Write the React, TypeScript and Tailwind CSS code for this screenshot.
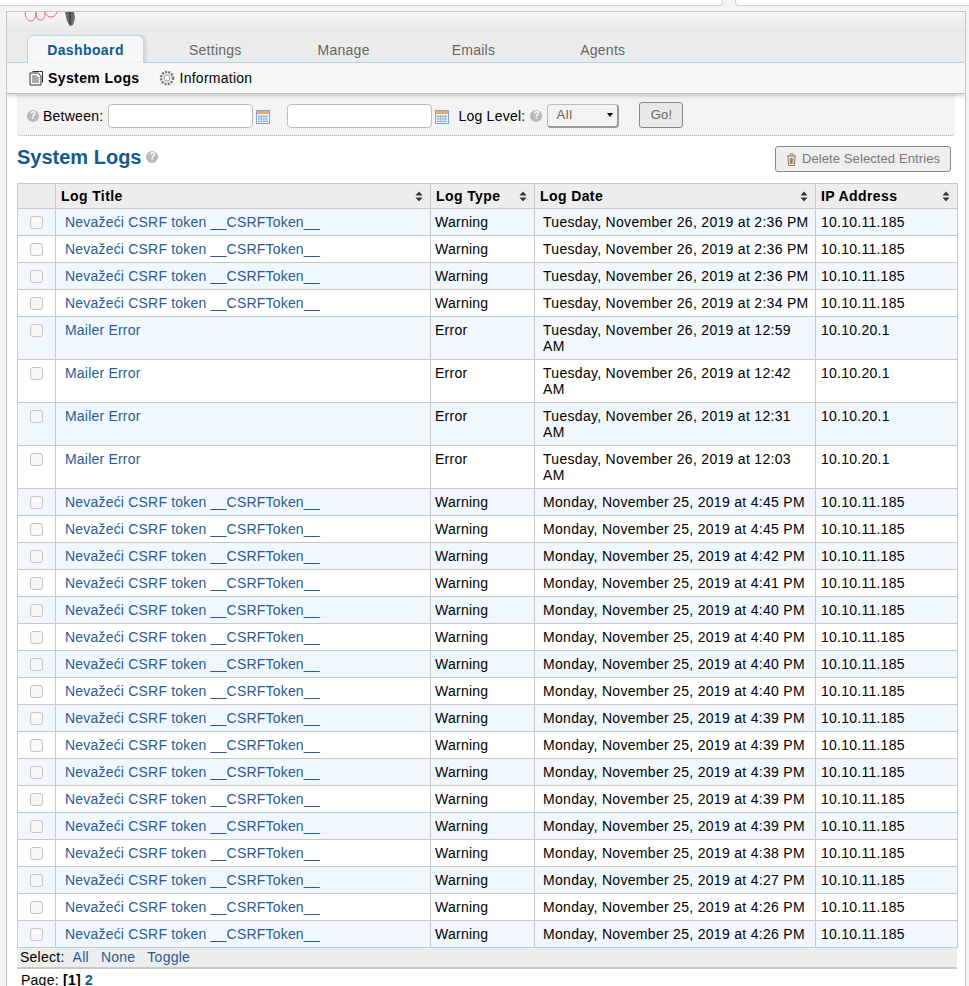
import React from "react";

type Row = [string, string, string, string];
const N = "Nevažeći CSRF token __CSRFToken__";
const M = "Mailer Error";
const rows: Row[] = [
  [N, "Warning", "Tuesday, November 26, 2019 at 2:36 PM", "10.10.11.185"],
  [N, "Warning", "Tuesday, November 26, 2019 at 2:36 PM", "10.10.11.185"],
  [N, "Warning", "Tuesday, November 26, 2019 at 2:36 PM", "10.10.11.185"],
  [N, "Warning", "Tuesday, November 26, 2019 at 2:34 PM", "10.10.11.185"],
  [M, "Error", "Tuesday, November 26, 2019 at 12:59 AM", "10.10.20.1"],
  [M, "Error", "Tuesday, November 26, 2019 at 12:42 AM", "10.10.20.1"],
  [M, "Error", "Tuesday, November 26, 2019 at 12:31 AM", "10.10.20.1"],
  [M, "Error", "Tuesday, November 26, 2019 at 12:03 AM", "10.10.20.1"],
  [N, "Warning", "Monday, November 25, 2019 at 4:45 PM", "10.10.11.185"],
  [N, "Warning", "Monday, November 25, 2019 at 4:45 PM", "10.10.11.185"],
  [N, "Warning", "Monday, November 25, 2019 at 4:42 PM", "10.10.11.185"],
  [N, "Warning", "Monday, November 25, 2019 at 4:41 PM", "10.10.11.185"],
  [N, "Warning", "Monday, November 25, 2019 at 4:40 PM", "10.10.11.185"],
  [N, "Warning", "Monday, November 25, 2019 at 4:40 PM", "10.10.11.185"],
  [N, "Warning", "Monday, November 25, 2019 at 4:40 PM", "10.10.11.185"],
  [N, "Warning", "Monday, November 25, 2019 at 4:40 PM", "10.10.11.185"],
  [N, "Warning", "Monday, November 25, 2019 at 4:39 PM", "10.10.11.185"],
  [N, "Warning", "Monday, November 25, 2019 at 4:39 PM", "10.10.11.185"],
  [N, "Warning", "Monday, November 25, 2019 at 4:39 PM", "10.10.11.185"],
  [N, "Warning", "Monday, November 25, 2019 at 4:39 PM", "10.10.11.185"],
  [N, "Warning", "Monday, November 25, 2019 at 4:39 PM", "10.10.11.185"],
  [N, "Warning", "Monday, November 25, 2019 at 4:38 PM", "10.10.11.185"],
  [N, "Warning", "Monday, November 25, 2019 at 4:27 PM", "10.10.11.185"],
  [N, "Warning", "Monday, November 25, 2019 at 4:26 PM", "10.10.11.185"],
  [N, "Warning", "Monday, November 25, 2019 at 4:26 PM", "10.10.11.185"],
];

function Help() {
  return (
    <span className="inline-flex h-[12px] w-[12px] items-center justify-center rounded-full bg-[#b8b8b8] text-[10px] font-bold leading-none tracking-normal text-white">
      ?
    </span>
  );
}

function Calendar() {
  return (
    <svg width="14" height="14" viewBox="0 0 14 14" className="mt-[3px] block shrink-0">
      <rect x="0.5" y="0.5" width="13" height="13" fill="#eef4fc" stroke="#7ba4dc" />
      <rect x="1" y="1" width="12" height="3" fill="#f0a868" />
      <path d="M3 5v7M5.5 5v7M8 5v7M10.5 5v7M2 6.5h10M2 9h10M2 11.5h10" stroke="#9db4d4" strokeWidth="1" fill="none" />
    </svg>
  );
}

function Sort() {
  return (
    <svg width="8" height="11" viewBox="0 0 8 11" className="shrink-0">
      <path d="M4 0.5L7.5 4.5H0.5Z M4 10.5L0.5 6.5H7.5Z" fill="#333" />
    </svg>
  );
}

function Th({ label, sort = true, w }: { label: string; sort?: boolean; w: string }) {
  return (
    <th className={`${w} h-[25px] border border-[#c8c8c8] bg-[#ededed] p-0 pl-[5px] pr-[7px] text-left align-middle text-[14px] font-bold tracking-[0.4px] text-black`}>
      <div className="flex items-center justify-between">
        <span>{label}</span>
        {sort && <Sort />}
      </div>
    </th>
  );
}

export default function App() {
  return (
    <div className="relative h-[986px] w-[969px] overflow-hidden bg-[#f4f4f4] font-['Liberation_Sans',Arial,sans-serif] text-[14px] tracking-[0.25px] text-black">
      <div className="flex h-[6px] gap-[12px] bg-[#f4f4f4]">
        <div className="h-[6px] w-[723px] rounded-br-[4px] border-b border-r border-[#cfcfcf] bg-white" />
        <div className="h-[6px] flex-1 rounded-bl-[4px] border-b border-l border-[#cfcfcf] bg-white" />
      </div>
      <div className="h-[5px]" />
      <div className="ml-[6px] mr-[3px] h-[975px] overflow-hidden border-l border-r border-t border-[#c4c4c4] bg-white">
        <div className="relative h-[20px] bg-gradient-to-b from-[#f6f6f6] to-[#e8e8e8]">
          <svg width="60" height="14" viewBox="0 0 60 14" className="absolute left-[17px] top-0">
            <path d="M1 0c0 6 3 9 6 9s5-3 5-9M12 0c0 6 2 8 5 8s4-3 4-8M21 0c1 3 3 5 6 5s5-2 6-5" fill="none" stroke="#f06a78" strokeWidth="1" />
            <path d="M41 0h9l1 6-2 7-3 1-3-5z" fill="#6a6a6a" />
            <path d="M46 0v13" stroke="#222" />
          </svg>
        </div>
        <div className="flex h-[31px] items-end border-b border-[#bcd6f0] bg-[#ececec] pl-[20px] text-[14px] text-[#666]">
          <div className="relative -mb-px flex h-[28px] w-[117px] items-center justify-center rounded-t-[6px] border border-b-0 border-[#bcd6f0] bg-[#f7f7f7] pt-[1px] font-bold tracking-[0.4px] text-[#0f5a8f] shadow-[2px_0_3px_rgba(0,0,0,0.12)]">
            Dashboard
          </div>
          <div className="flex h-[28px] items-center pl-[45px] pt-[4px]">Settings</div>
          <div className="flex h-[28px] items-center pl-[76px] pt-[4px]">Manage</div>
          <div className="flex h-[28px] items-center pl-[82px] pt-[4px]">Emails</div>
          <div className="flex h-[28px] items-center pl-[85px] pt-[4px]">Agents</div>
        </div>
        <div className="relative z-10 flex h-[31px] items-center border-b border-[#c0c0c0] bg-[#f7f7f7] pl-[22px] shadow-[0_2px_4px_rgba(0,0,0,0.18)]">
          <svg width="15" height="16" viewBox="0 0 15 16" className="mr-[4px] shrink-0">
            <path d="M3.5 1.5h7l3 0v11" fill="none" stroke="#333" />
            <path d="M1 3h8l3 3v9H1z" fill="#fff" stroke="#333" />
            <path d="M3 6h5M3 8h7M3 10h7M3 12h7" stroke="#555" />
          </svg>
          <span className="font-bold tracking-[0.4px]">System Logs</span>
          <svg width="16" height="16" viewBox="0 0 16 16" className="ml-[19px] mr-[5px] shrink-0">
            <circle cx="8" cy="8" r="6" fill="none" stroke="#777" strokeWidth="2.5" strokeDasharray="2 1.2" />
            <circle cx="8" cy="8" r="3" fill="#fff" stroke="#999" />
          </svg>
          <span>Information</span>
        </div>
        <div className="px-[10px]">
          <div className="flex h-[42px] items-center rounded-b-[4px] border-b border-dotted border-[#aaa] bg-[#f3f3f3] pl-[10px] pt-[2px]">
            <Help />
            <span className="ml-[4px] pt-[1px]">Between:</span>
            <div className="ml-[5px] h-[24px] w-[145px] rounded-[4px] border border-[#bdbdbd] bg-white" />
            <span className="ml-[3px]"><Calendar /></span>
            <div className="ml-[17px] h-[24px] w-[145px] rounded-[4px] border border-[#bdbdbd] bg-white" />
            <span className="ml-[3px]"><Calendar /></span>
            <span className="ml-[9px] pt-[1px]">Log Level:</span>
            <span className="ml-[5px] flex"><Help /></span>
            <div className="ml-[5px] flex h-[24px] w-[72px] items-center justify-between rounded-[4px] border border-[#bdbdbd] border-b-2 border-r-2 border-b-[#999] border-r-[#999] bg-[#f3f3f3] pl-[8px] pr-[4px] text-[13px] tracking-[0.6px] text-[#666]">
              <span>All</span>
              <span className="h-0 w-0 border-x-[3px] border-t-[4px] border-x-transparent border-t-black" />
            </div>
            <div className="-mt-[1px] ml-[20px] flex h-[26px] w-[44px] items-center justify-center rounded-[3px] border border-[#888] bg-[#e8e8e8] text-[13px] text-[#666]">
              Go!
            </div>
          </div>
          <div className="flex h-[47px] items-start justify-between">
            <div className="mt-[6px] flex items-center">
              <span className="text-[20px] font-bold tracking-normal text-[#0f5a8f]">System Logs</span>
              <span className="ml-[5px] flex"><Help /></span>
            </div>
            <div className="mr-[4px] mt-[10px] flex h-[26px] w-[176px] items-center justify-center gap-[5px] rounded-[3px] border border-[#888] bg-[#eeeeee] text-[13px] tracking-[0.1px] text-[#777]">
              <svg width="11" height="13" viewBox="0 0 11 13">
                <path d="M1 3h9M4 3V1h3v2M2 3l.6 9.5h5.8L9 3M4.2 5v6M5.5 5v6M6.8 5v6" fill="none" stroke="#8a7a5a" />
              </svg>
              Delete Selected Entries
            </div>
          </div>
          <table className="w-[940px] table-fixed border-collapse">
            <thead>
              <tr>
                <Th label="" sort={false} w="w-[38px]" />
                <Th label="Log Title" w="w-[375px]" />
                <Th label="Log Type" w="w-[104px]" />
                <Th label="Log Date" w="w-[281px]" />
                <Th label="IP Address" w="w-[142px]" />
              </tr>
            </thead>
            <tbody>
              {rows.map((r, i) => {
                const bg = i % 2 === 0 ? "bg-[#f0f8fd]" : "bg-white";
                return (
                  <tr key={i} className={bg}>
                    <td className="h-[26px] border border-[#c8c8c8] p-0 pt-[7px] align-top">
                      <div className="mx-auto h-[13px] w-[13px] rounded-[3px] border border-[#c4c4c4] bg-[#f7f7f7]" />
                    </td>
                    <td className="border border-[#c8c8c8] p-0 pl-[9px] pt-[5px] align-top leading-[16px] tracking-[0.2px] text-[#2a5a96]">
                      {r[0]}
                    </td>
                    <td className="border border-[#c8c8c8] p-0 pl-[4px] pt-[5px] align-top leading-[16px]">{r[1]}</td>
                    <td className="border border-[#c8c8c8] p-0 pb-[5px] pl-[8px] pr-[6px] pt-[5px] align-top leading-[16px] tracking-[0.3px]">{r[2]}</td>
                    <td className="border border-[#c8c8c8] p-0 pl-[5px] pt-[5px] align-top leading-[16px]">{r[3]}</td>
                  </tr>
                );
              })}
            </tbody>
          </table>
          <div className="flex h-[21px] w-[940px] items-center gap-[8px] border-b-2 border-[#c8c8c8] bg-[#ededed] pl-[3px] text-[#2a5a96]">
            <span className="text-black">Select:</span>
            <span>All</span>
            <span className="ml-[4px]">None</span>
            <span className="ml-[4px]">Toggle</span>
          </div>
          <div className="mt-[3px] pl-[4px] leading-[16px]">
            Page: <b>[1]</b> <b className="text-[#0f5a8f]">2</b>
          </div>
        </div>
      </div>
    </div>
  );
}
